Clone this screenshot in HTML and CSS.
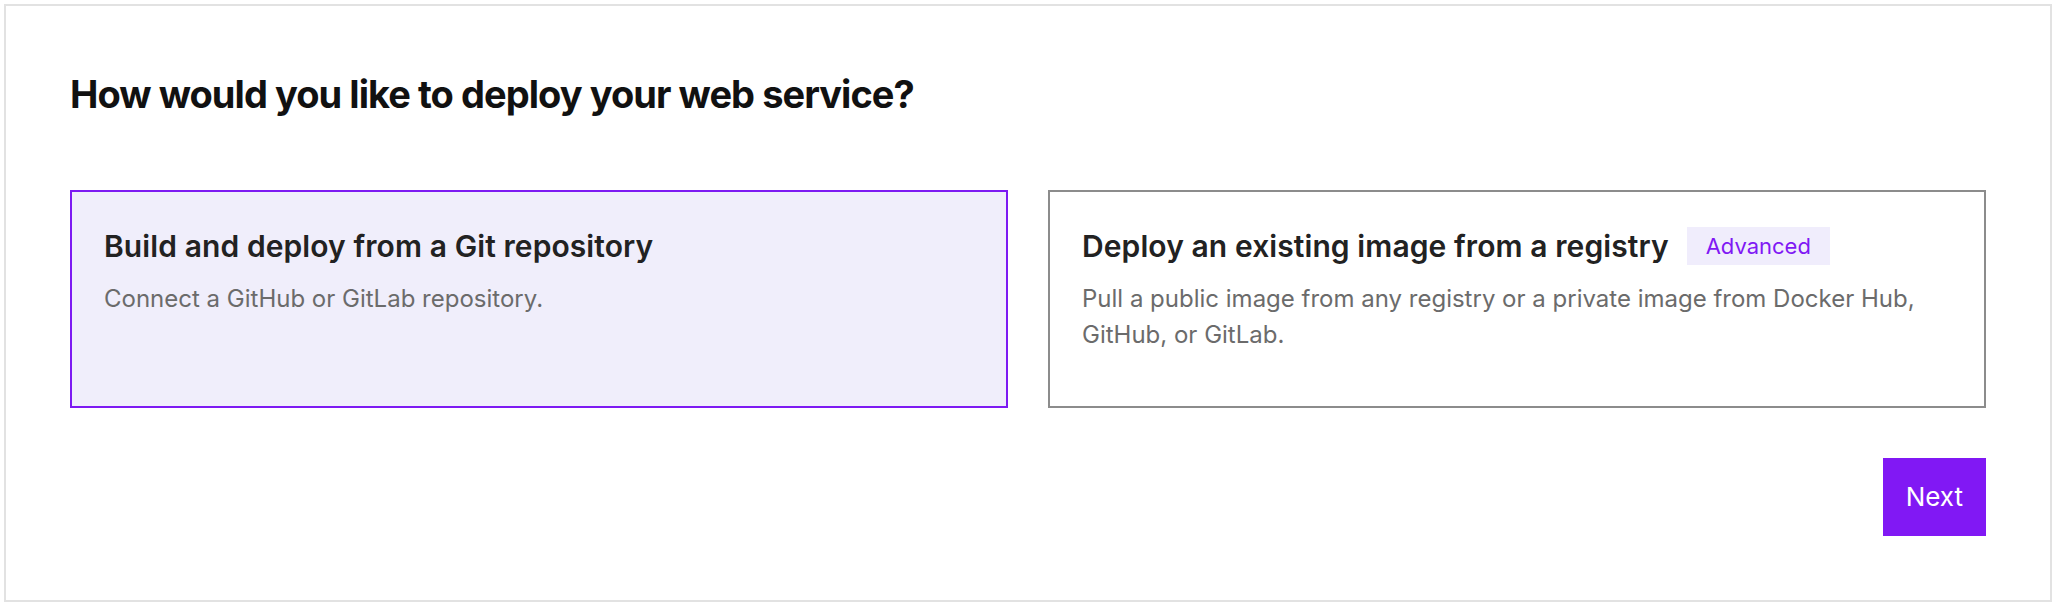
FILE: index.html
```html
<!DOCTYPE html>
<html lang="en">
<head>
<meta charset="utf-8">
<title>Deploy web service</title>
<link rel="stylesheet" href="styles.css">
</head>
<body>
<main class="panel">
  <h1 class="heading">How would you like to deploy your web service?</h1>
  <div class="options">
    <div class="option option-selected">
      <div class="option-title-row">
        <h2 class="option-title">Build and deploy from a Git repository</h2>
      </div>
      <p class="option-desc">Connect a GitHub or GitLab repository.</p>
    </div>
    <div class="option">
      <div class="option-title-row">
        <h2 class="option-title">Deploy an existing image from a registry</h2>
        <span class="badge">Advanced</span>
      </div>
      <p class="option-desc">Pull a public image from any registry or a private image from Docker Hub, GitHub, or GitLab.</p>
    </div>
  </div>
  <div class="actions">
    <button class="btn-next" type="button">Next</button>
  </div>
</main>
</body>
</html>
```

FILE: styles.css
```css
* { box-sizing: border-box; }
html, body { background: #ffffff; }
body {
  margin: 4px;
  font-family: Inter, "Noto Sans", "Liberation Sans", sans-serif;
  color: #1a1a1a;
}
.panel {
  border: 2px solid #e2e2e2;
  padding: 64px;
  display: flex;
  flex-direction: column;
}
.heading {
  margin: 0 0 72px 0;
  font-size: 38px;
  line-height: 48px;
  font-weight: 700;
  letter-spacing: -0.025em;
  color: #111111;
}
.options {
  display: grid;
  grid-template-columns: 1fr 1fr;
  gap: 40px;
}
.option {
  min-height: 218px;
  border: 2px solid #8c8c8c;
  background: #ffffff;
  padding: 34px 32px 30px 32px;
  display: flex;
  flex-direction: column;
}
.option-selected {
  border-color: #7d1af2;
  background: #f0eefb;
}
.option-title-row {
  display: flex;
  align-items: center;
  gap: 18px;
}
.option-title {
  margin: 0;
  font-size: 30px;
  line-height: 40px;
  font-weight: 600;
  letter-spacing: 0.003em;
  color: #222222;
}
.badge {
  background: #f0edfc;
  color: #8018f4;
  font-size: 22px;
  line-height: 38px;
  padding: 0 19px;
}
.option-desc {
  margin: 15px 0 0 0;
  font-size: 24px;
  line-height: 36px;
  color: #6b6b6b;
}
.actions {
  display: flex;
  justify-content: flex-end;
  margin-top: 50px;
}
.btn-next {
  border: none;
  background: #8118f4;
  color: #ffffff;
  font-family: Inter, "Noto Sans", "Liberation Sans", sans-serif;
  font-size: 26px;
  line-height: 30px;
  padding: 24px 23px;
  cursor: pointer;
}
```
